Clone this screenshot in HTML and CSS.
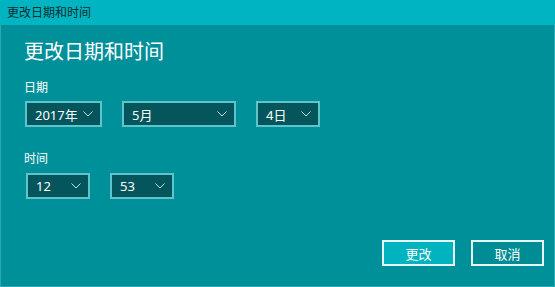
FILE: index.html
```html
<!DOCTYPE html>
<html lang="zh">
<head>
    <meta charset="UTF-8">
    <title>更改日期和时间</title>
    <link rel="stylesheet" href="styles.css">
</head>
<body>
    <div class="window">
        <div class="titlebar">更改日期和时间</div>
        <div class="content">
            <h1 class="heading">更改日期和时间</h1>

            <div class="label">日期</div>
            <div class="row">
                <div class="dropdown w-year"><span>2017年</span><svg class="chevron" width="10" height="6" viewBox="0 0 10 6"><polyline points="0.5,0.5 5,5 9.5,0.5"/></svg></div>
                <div class="dropdown w-month"><span>5月</span><svg class="chevron" width="10" height="6" viewBox="0 0 10 6"><polyline points="0.5,0.5 5,5 9.5,0.5"/></svg></div>
                <div class="dropdown w-small"><span>4日</span><svg class="chevron" width="10" height="6" viewBox="0 0 10 6"><polyline points="0.5,0.5 5,5 9.5,0.5"/></svg></div>
            </div>

            <div class="label label-time">时间</div>
            <div class="row row-time">
                <div class="dropdown w-small"><span>12</span><svg class="chevron" width="10" height="6" viewBox="0 0 10 6"><polyline points="0.5,0.5 5,5 9.5,0.5"/></svg></div>
                <div class="dropdown w-small"><span>53</span><svg class="chevron" width="10" height="6" viewBox="0 0 10 6"><polyline points="0.5,0.5 5,5 9.5,0.5"/></svg></div>
            </div>

            <div class="actions">
                <button class="btn btn-primary">更改</button>
                <button class="btn">取消</button>
            </div>
        </div>
    </div>
</body>
</html>
```

FILE: styles.css
```css
body {
    margin: 0;
    padding: 0;
    font-family: "Noto Sans", "Noto Sans CJK SC", sans-serif;
}

.window {
    width: 555px;
    height: 287px;
    box-sizing: border-box;
    background-color: #00909a;
    border-left: 1px solid #2aaab3;
    border-right: 1px solid #2aaab3;
    border-bottom: 1px solid #2aaab3;
    display: flex;
    flex-direction: column;
}

.titlebar {
    height: 25px;
    line-height: 25px;
    background-color: #00b5c1;
    color: #0b2b2e;
    font-size: 12px;
    padding-left: 7px;
    margin-left: -1px;
    margin-right: -1px;
}

.content {
    flex: 1;
    display: flex;
    flex-direction: column;
    padding: 13px 10px 0 23px;
}

.heading {
    margin: 0;
    font-size: 20px;
    font-weight: normal;
    line-height: 28px;
    color: #ffffff;
}

.label {
    margin-top: 14px;
    font-size: 12px;
    line-height: 16px;
    color: #ffffff;
}

.label-time {
    margin-top: 24px;
}

.row {
    display: flex;
    gap: 20px;
    margin-top: 5px;
    padding-left: 1px;
}

.row-time {
    margin-top: 6px;
    padding-left: 2px;
}

.dropdown {
    height: 26px;
    box-sizing: border-box;
    border: 2px solid #5cc4ca;
    background-color: #04565c;
    color: #ffffff;
    font-size: 13px;
    display: flex;
    align-items: center;
    justify-content: space-between;
    padding: 0 7px 0 8px;
}

.chevron {
    fill: none;
    stroke: #b9dfe1;
    stroke-width: 1;
}

.w-year {
    width: 77px;
}

.w-month {
    width: 114px;
}

.w-small {
    width: 64px;
}

.actions {
    margin-top: auto;
    margin-bottom: 20px;
    display: flex;
    justify-content: flex-end;
    gap: 16px;
}

.btn {
    width: 73px;
    height: 26px;
    box-sizing: border-box;
    border: 2px solid #e6f6f7;
    background-color: #008c95;
    color: #ffffff;
    font-family: "Noto Sans CJK SC", sans-serif;
    font-size: 13px;
    padding: 0;
}

.btn-primary {
    background-color: #00b3bf;
}
```
